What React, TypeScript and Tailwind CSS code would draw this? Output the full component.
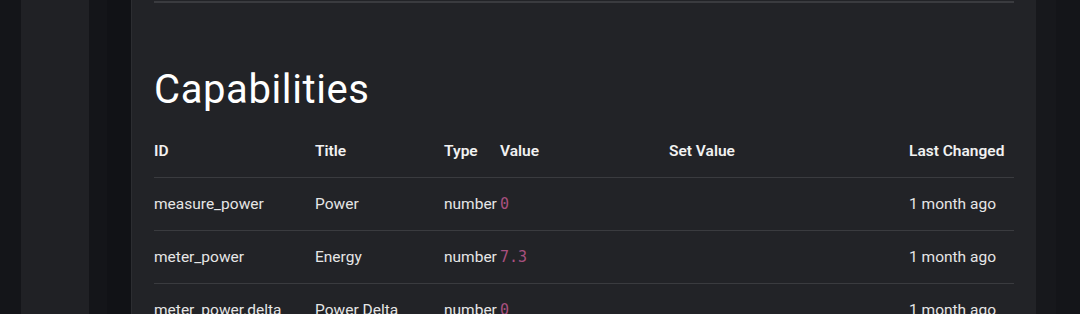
// Device detail page: capabilities table inside the dark content panel.
const rows = [
  { id: "measure_power", title: "Power", type: "number", value: "0", changed: "1 month ago" },
  { id: "meter_power", title: "Energy", type: "number", value: "7.3", changed: "1 month ago" },
  { id: "meter_power.delta", title: "Power Delta", type: "number", value: "0", changed: "1 month ago" },
];

const cols = "grid grid-cols-[161px_129px_56px_169px_240px_105px]";

export default function App() {
  return (
    <div className="flex h-[314px] w-[1080px] overflow-hidden bg-[#141519] font-['Roboto',sans-serif]">
      <div className="w-[21px] shrink-0" />
      <div className="w-[68px] shrink-0 bg-[#202125]" />
      <div className="w-[18px] shrink-0" />
      <div className="w-[24px] shrink-0 bg-[#111216]" />
      <main className="w-[905px] shrink-0 border-l border-[#2c2d31] bg-[#222327] px-[22px]">
        <div className="mt-px h-[2px] bg-[#3a3b3f]" />
        <h2 className="mt-[65px] mb-[13px] text-[40px] leading-[44px] tracking-[0.6px] text-white">Capabilities</h2>
        <div className={`${cols} h-[53px] items-center border-b border-[#3a3b3f] pt-0.5 text-[15.5px] font-semibold text-[#f1f1f1]`}>
          <div>ID</div>
          <div>Title</div>
          <div>Type</div>
          <div>Value</div>
          <div>Set Value</div>
          <div>Last Changed</div>
        </div>
        {rows.map((r) => (
          <div key={r.id} className={`${cols} h-[53px] items-center border-b border-[#3a3b3f] pt-px text-[15.5px] text-[#e6e6e6]`}>
            <div className="whitespace-nowrap">{r.id}</div>
            <div className="whitespace-nowrap">{r.title}</div>
            <div>{r.type}</div>
            <div className="font-['DejaVu_Sans_Mono',monospace] text-[15px] text-[#a8507f]">{r.value}</div>
            <div />
            <div className="whitespace-nowrap">{r.changed}</div>
          </div>
        ))}
      </main>
      <div className="w-[20px] shrink-0 bg-[#17181c]" />
    </div>
  );
}
